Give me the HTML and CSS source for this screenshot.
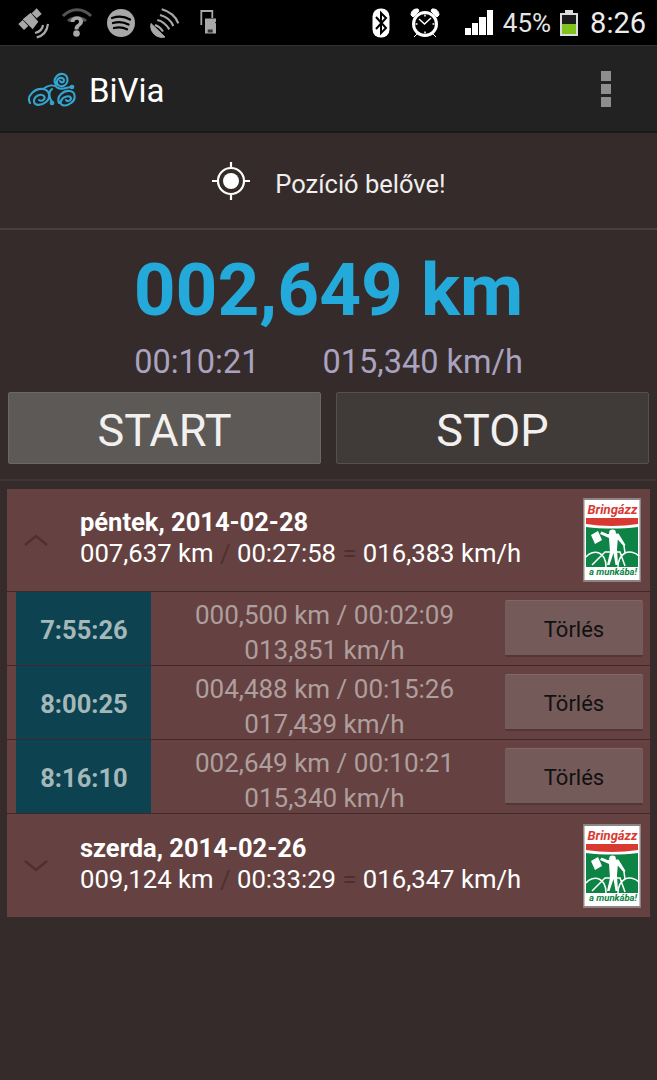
FILE: index.html
```html
<!DOCTYPE html>
<html lang="en">
<head>
    <meta charset="UTF-8">
    <title>BiVia</title>
    <link rel="stylesheet" href="styles.css">
</head>
<body>
    <div class="status-bar">
        <div class="status-left">
            <!-- satellite -->
            <svg width="38" height="45" viewBox="17 0 38 45" fill="#a8a8a8">
                <path d="M31.700 13.300l5-5 5 5.700-5 4.300zM18.300 24l4.400-4 5.600 6-4.300 4zM22.700 19.300l8-6.600 7.600 9-5.600 7.600z"/>
                <path d="M43 25c-.5 4-3.500 7-8 8M48 24c-1 7-5 12-11.300 13.300" fill="none" stroke="#a8a8a8" stroke-width="2.200"/>
            </svg>
            <!-- wifi with question mark -->
            <svg width="45" height="45" viewBox="55 0 45 45">
                <path d="M63 16c8-8.500 20-8.500 28 0M68 21c5-4.500 13-4.500 18 0" fill="none" stroke="#555" stroke-width="3"/>
                <path d="M70.500 22c0-7 12.500-7.500 12.500-.5 0 4.500-4.500 4-4.500 8h-4c0-5.500 4.500-5 4.500-8 0-2.500-4.500-2.500-4.500.5z" fill="#a8a8a8"/>
                <circle cx="76.500" cy="33.500" r="3.300" fill="#a8a8a8"/>
            </svg>
            <!-- spotify -->
            <svg width="42" height="45" viewBox="100 0 42 45">
                <circle cx="121" cy="23" r="14" fill="#a8a8a8"/>
                <path d="M112 18c6-2 13-1.500 18 1.500M113 23c5-1.500 11-1 15.500 1.500M114 28c4-1 9-.8 13 1.200" fill="none" stroke="#000" stroke-width="2.300" stroke-linecap="round"/>
            </svg>
            <!-- dish -->
            <svg width="48" height="45" viewBox="142 0 48 45">
                <path d="M151 23.500l14 13.500c-7 2-16-4-14-13.500z" fill="#a8a8a8" stroke="#a8a8a8"/>
                <path d="M161.700 9.300c8 2 14.500 7.500 16.600 14M160 15c6 1.500 11 5.500 13.300 11M157.300 20c4.500 1 9 4.500 12 9.300M155 25c3 1 6 3.500 8 6.500" fill="none" stroke="#a8a8a8" stroke-width="2.200"/>
            </svg>
            <!-- sd card -->
            <svg width="30" height="45" viewBox="190 0 30 45">
                <path d="M212.300 18v-7h-11v14" fill="none" stroke="#a8a8a8" stroke-width="1.800"/>
                <path d="M205 18.500h11v3l-1 1 1 1v10h-11z" fill="#a8a8a8"/>
                <path d="M207.700 29.500h5v3h-5z" fill="#333"/>
            </svg>
        </div>
        <div class="status-right">
            <svg class="bt-icon" width="18" height="30" viewBox="0 0 18 30">
                <rect width="17" height="29" x=".5" y=".5" rx="8" fill="#fff"/>
                <path d="M4 9l10 11-5 5V5l5 5-10 11" fill="none" stroke="#000" stroke-width="2"/>
            </svg>
            <svg class="alarm-icon" width="30" height="30" viewBox="0 0 30 30">
                <circle cx="15" cy="16" r="11.500" fill="none" stroke="#fff" stroke-width="3"/>
                <path d="M1 7c0-4 3-6.500 7-6l1 2-6 6zM29 7c0-4-3-6.500-7-6l-1 2 6 6zM7 26l-3 3M23 26l3 3" stroke="#fff" fill="#fff"/>
                <path d="M9 11l5.500 5 6.500-6M15 6.500v2M15 23.500v2M5.500 16h2M22.500 16h2" fill="none" stroke="#fff" stroke-width="1.500"/>
            </svg>
            <div class="signal">
                <span class="bar-1"></span><span class="bar-2"></span><span class="bar-3"></span><span class="bar-4"></span>
            </div>
            <span class="battery-text">45%</span>
            <div class="battery"><div class="battery-level"></div></div>
            <span class="clock">8:26</span>
        </div>
    </div>

    <div class="action-bar">
        <svg class="app-logo" width="50" height="37" viewBox="27 72 50 37" fill="none" stroke="#33a5d0" stroke-width="2.100" stroke-linecap="round">
            <path d="M30 103c-4-7 5-15 13-14 7 1 8 9 3 13-5 4-12 4-12-1 0-5 7-8 10-5 2 3-2 6-5 4"/>
            <path d="M59 103c-3-7 5-13 11-12s6 9 1 12c-5 4-12 3-10-2 2-5 9-6 10-3 0 3-4 4-5 2"/>
            <path d="M56 85c-4-6 2-12 7-11s6 8 2 11c-4 3-9 0-8-4 1-4 6-4 7-1 0 3-3 3-4 1"/>
            <path d="M43 89c5-4 11-5 15-1 4 2 10-1 13-1"/>
            <path d="M52 89c-4 3-3 9 0 13"/>
            <circle cx="72" cy="87" r="1.300"/>
            <circle cx="52" cy="103" r="1.300"/>
        </svg>
        <span class="app-title">BiVia</span>
        <div class="overflow"><span></span><span></span><span></span></div>
    </div>

    <div class="position-row">
        <svg width="40" height="40" viewBox="0 0 40 40" fill="none" stroke="#fff">
            <circle cx="20" cy="20" r="13" stroke-width="2.200"/>
            <circle cx="20" cy="20" r="8" fill="#fff" stroke="none"/>
            <path d="M20 1v7M20 32v7M1 20h7M32 20h7" stroke-width="2.200"/>
        </svg>
        <span class="position-text">Pozíció belőve!</span>
    </div>

    <div class="tracker">
        <div class="distance">002,649 km</div>
        <div class="sub-values">
            <span>00:10:21</span>
            <span>015,340 km/h</span>
        </div>
        <div class="buttons">
            <button class="big-btn start-btn">START</button>
            <button class="big-btn stop-btn">STOP</button>
        </div>
    </div>

    <div class="trips">
        <div class="day">
            <svg class="chevron" width="24" height="12" viewBox="0 0 24 12"><path d="M1 11L12 2l11 9" fill="none" stroke="#50302f" stroke-width="2.400"/></svg>
            <div class="day-text">
                <div class="day-name">péntek, 2014-02-28</div>
                <div class="day-sum">007,637 km <i>/</i> 00:27:58 <i>=</i> 016,383 km/h</div>
            </div>
            <svg class="day-logo" width="58" height="84" viewBox="0 0 58 84">
                <rect width="58" height="84" rx="1" fill="#8d8583"/>
                <rect x="1.500" y="2" width="55" height="80" fill="#fff"/>
                <text x="29.500" y="16" class="logo-top">Bringázz</text>
                <path d="M3 20h52v6c-17 2.500-35 2.500-52 0z" fill="#d83a32"/>
                <path d="M3 29c17 2 35 2 52 0v40H3z" fill="#0d8345"/>
                <path d="M8 37l7-4 4 9-7 4z" fill="#fff"/>
                <circle cx="29.500" cy="35" r="3.400" fill="#fff"/>
                <path d="M17 36l9 4 7-.5 8 9 1.500-1.500-7-11.500-11 .5-6-2.500zM26 40l1 14-3 13h2.500l4-12 2 12h2.500l-1-16 1-12z" fill="#fff"/>
                <g fill="none" stroke="#fff" stroke-width="1.500">
                    <path d="M3 59c3-4 9-6 13-4 5 2 7 7 7 14M56 58c-4-4-10-5-14-3-5 3-7 8-7 14M9 67l13-13h15l5 14M41 48l1 7"/>
                </g>
                <text x="30" y="77" class="logo-bottom">a munkába!</text>
            </svg>
        </div>
        <div class="ride">
            <div class="ride-time">7:55:26</div>
            <div class="ride-data">000,500 km / 00:02:09<br>013,851 km/h</div>
            <button class="del-btn">Törlés</button>
        </div>
        <div class="ride">
            <div class="ride-time">8:00:25</div>
            <div class="ride-data">004,488 km / 00:15:26<br>017,439 km/h</div>
            <button class="del-btn">Törlés</button>
        </div>
        <div class="ride">
            <div class="ride-time">8:16:10</div>
            <div class="ride-data">002,649 km / 00:10:21<br>015,340 km/h</div>
            <button class="del-btn">Törlés</button>
        </div>
        <div class="day">
            <svg class="chevron" width="24" height="12" viewBox="0 0 24 12"><path d="M1 1l11 9 11-9" fill="none" stroke="#50302f" stroke-width="2.400"/></svg>
            <div class="day-text">
                <div class="day-name">szerda, 2014-02-26</div>
                <div class="day-sum">009,124 km <i>/</i> 00:33:29 <i>=</i> 016,347 km/h</div>
            </div>
            <svg class="day-logo" width="58" height="84" viewBox="0 0 58 84">
                <rect width="58" height="84" rx="1" fill="#8d8583"/>
                <rect x="1.500" y="2" width="55" height="80" fill="#fff"/>
                <text x="29.500" y="16" class="logo-top">Bringázz</text>
                <path d="M3 20h52v6c-17 2.500-35 2.500-52 0z" fill="#d83a32"/>
                <path d="M3 29c17 2 35 2 52 0v40H3z" fill="#0d8345"/>
                <path d="M8 37l7-4 4 9-7 4z" fill="#fff"/>
                <circle cx="29.500" cy="35" r="3.400" fill="#fff"/>
                <path d="M17 36l9 4 7-.5 8 9 1.500-1.500-7-11.500-11 .5-6-2.500zM26 40l1 14-3 13h2.500l4-12 2 12h2.500l-1-16 1-12z" fill="#fff"/>
                <g fill="none" stroke="#fff" stroke-width="1.500">
                    <path d="M3 59c3-4 9-6 13-4 5 2 7 7 7 14M56 58c-4-4-10-5-14-3-5 3-7 8-7 14M9 67l13-13h15l5 14M41 48l1 7"/>
                </g>
                <text x="30" y="77" class="logo-bottom">a munkába!</text>
            </svg>
        </div>
    </div>
</body>
</html>
```

FILE: styles.css
```css
html, body {
    margin: 0;
    padding: 0;
}

body {
    width: 657px;
    height: 1080px;
    overflow: hidden;
    background: #352b2b;
    font-family: Roboto, "Liberation Sans", sans-serif;
    color: #fff;
}

.logo-top {
    font: italic bold 13px Roboto, sans-serif;
    fill: #d83a32;
    text-anchor: middle;
}

.logo-bottom {
    font: italic bold 9.500px Roboto, sans-serif;
    fill: #0d8345;
    text-anchor: middle;
}

/* Status bar */
.status-bar {
    height: 45px;
    background: #000;
    display: flex;
    justify-content: space-between;
    align-items: center;
    padding: 0 11px 0 17px;
}

.status-left {
    display: flex;
    align-items: center;
}

.status-right {
    display: flex;
    align-items: center;
}

.bt-icon {
    margin-right: 20px;
}

.alarm-icon {
    margin-right: 25px;
}

.signal {
    display: flex;
    align-items: flex-end;
    gap: 1px;
    height: 25px;
    margin-right: 10px;
}

.signal span {
    width: 6.300px;
    background: #fff;
}

.bar-1 { height: 7px; }
.bar-2 { height: 12px; }
.bar-3 { height: 18px; }
.bar-4 { height: 25px; }

.battery-text {
    font-size: 26px;
    color: #e4e4e4;
    margin-right: 9px;
}

.battery {
    width: 18px;
    height: 23px;
    box-sizing: border-box;
    margin-top: 3px;
    border: 2px solid #ddd;
    background: #1c1c1c;
    position: relative;
    display: flex;
    align-items: flex-end;
    margin-right: 12px;
}

.battery::before {
    content: '';
    position: absolute;
    top: -5px;
    left: 3px;
    width: 8px;
    height: 3px;
    background: #ddd;
}

.battery-level {
    width: 100%;
    height: 10px;
    background: #7fc31c;
}

.clock {
    font-size: 29px;
    color: #ececec;
}

/* Action bar */
.action-bar {
    height: 85px;
    background: #222;
    border-top: 1px solid #333;
    border-bottom: 2px solid #1a1a1a;
    display: flex;
    align-items: center;
    padding: 0 46px 0 27px;
}

.app-logo {
    margin-right: 12px;
    margin-top: 3px;
}

.app-title {
    font-size: 33px;
    flex: 1;
    margin-top: 3px;
}

.overflow {
    display: flex;
    flex-direction: column;
    gap: 3px;
}

.overflow span {
    width: 10px;
    height: 10px;
    background: #8e8e8e;
}

/* Position */
.position-row {
    height: 95px;
    border-bottom: 2px solid #4a3f3f;
    display: flex;
    align-items: center;
    justify-content: center;
    gap: 24px;
    font-size: 25.500px;
    color: #f0eeee;
}

.position-text {
    margin-top: 6px;
}

/* Tracker */
.tracker {
    height: 249px;
    border-bottom: 2px solid #3e3434;
    display: flex;
    flex-direction: column;
}

.distance {
    font-size: 73px;
    font-weight: 700;
    color: #23a9da;
    text-align: center;
    line-height: 84px;
    margin-top: 18px;
}

.sub-values {
    display: flex;
    justify-content: center;
    gap: 63px;
    font-size: 32.500px;
    line-height: 36px;
    color: #aaa3c0;
    margin-top: 12px;
}

.buttons {
    display: flex;
    gap: 15px;
    padding: 0 8px;
    margin-top: 12px;
}

.big-btn {
    flex: 1;
    height: 72px;
    font-family: inherit;
    font-size: 45px;
    color: #f2f0ee;
    border-radius: 2px;
    padding: 4px 0 0;
}

.start-btn {
    background: #5d5956;
    border: 1px solid #6b6763;
}

.stop-btn {
    background: #403a38;
    border: 1px solid #554f4d;
}

/* Trip list */
.trips {
    margin: 8px 7px 0 7px;
    background: #654241;
}

.day {
    height: 102px;
    display: flex;
    align-items: center;
    padding-right: 9px;
}

.chevron {
    margin-left: 17px;
}

.day-text {
    flex: 1;
    margin-left: 32px;
    padding-bottom: 4px;
    font-size: 25.700px;
    line-height: 31px;
}

.day-name {
    font-weight: 700;
    font-size: 25.500px;
}

.day-sum i {
    font-style: normal;
    color: #50302f;
}

.day-logo {
    display: block;
}

.ride {
    height: 73px;
    border-top: 1px solid #41292a;
    display: flex;
    align-items: stretch;
    padding-left: 9px;
    padding-right: 7px;
}

.ride + .day {
    height: 103px;
    border-top: 1px solid #41292a;
}

.ride-time {
    width: 135px;
    background: #0d4250;
    color: #a4b8ba;
    font-size: 25.500px;
    font-weight: 700;
    display: flex;
    align-items: center;
    justify-content: center;
    padding: 2px 0 0 1px;
    box-sizing: border-box;
}

.ride-data {
    flex: 1;
    font-size: 26px;
    line-height: 35px;
    text-align: center;
    color: #ae9f9e;
    padding: 6px 7px 0 0;
}

.del-btn {
    width: 138px;
    height: 57px;
    margin-top: 8px;
    background: #755a5a;
    border: none;
    border-top: 1px solid #806767;
    border-bottom: 2px solid #503838;
    border-radius: 2px;
    font-family: inherit;
    font-size: 22px;
    color: #111;
    padding: 2px 0 0;
}
```
